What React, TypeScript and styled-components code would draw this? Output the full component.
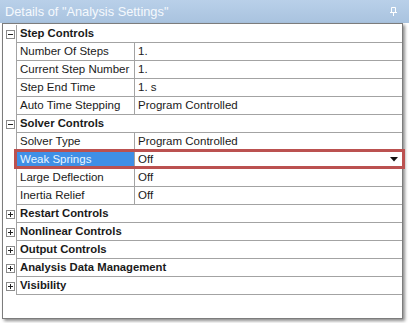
import React from "react";
import styled, { createGlobalStyle } from "styled-components";

type Prop = { name: string; value: string; selected?: boolean; dropdown?: boolean };
type Section = { title: string; open: boolean; props: Prop[] };

const sections: Section[] = [
  {
    title: "Step Controls",
    open: true,
    props: [
      { name: "Number Of Steps", value: "1." },
      { name: "Current Step Number", value: "1." },
      { name: "Step End Time", value: "1. s" },
      { name: "Auto Time Stepping", value: "Program Controlled" },
    ],
  },
  {
    title: "Solver Controls",
    open: true,
    props: [
      { name: "Solver Type", value: "Program Controlled" },
      { name: "Weak Springs", value: "Off", selected: true, dropdown: true },
      { name: "Large Deflection", value: "Off" },
      { name: "Inertia Relief", value: "Off" },
    ],
  },
  { title: "Restart Controls", open: false, props: [] },
  { title: "Nonlinear Controls", open: false, props: [] },
  { title: "Output Controls", open: false, props: [] },
  { title: "Analysis Data Management", open: false, props: [] },
  { title: "Visibility", open: false, props: [] },
];

const Global = createGlobalStyle`
  html, body {
    margin: 0;
    background: #fff;
  }
  body {
    font-family: "Liberation Sans", Arial, sans-serif;
  }
`;

const Window = styled.div`
  width: 409px;
  height: 323px;
  display: flex;
  flex-direction: column;
  background: #fff;
`;

const TitleBar = styled.div`
  height: 23px;
  flex: none;
  display: flex;
  align-items: center;
  justify-content: space-between;
  padding: 0 12px 1px 5px;
  box-sizing: border-box;
  background: linear-gradient(to bottom, #b9d0e9, #a9c3df);
  color: #f5f9fd;
  font-size: 12.8px;
`;

const Panel = styled.div`
  margin-left: 2px;
  width: 401px;
  height: 296px;
  box-sizing: border-box;
  border: 1px solid #7c7c7c;
  padding-top: 1px;
  box-shadow: 2px 2px 3px rgba(0, 0, 0, 0.45);
  display: flex;
  flex-direction: column;
`;

const Row = styled.div`
  position: relative;
  display: grid;
  grid-template-columns: 13px 1fr;
  height: 18px;
`;

const Gutter = styled.div`
  display: flex;
  align-items: center;
  justify-content: center;
  padding-left: 1px;
`;

const Cell = styled.div`
  border-left: 1px solid #a3a3a3;
  border-bottom: 1px solid #a3a3a3;
  display: grid;
  grid-template-columns: 118px 1fr;
  color: #1a1a1a;
  font-size: 11.5px;
  line-height: 17px;
  white-space: nowrap;
`;

const HeaderText = styled.div`
  grid-column: 1 / -1;
  padding-left: 3px;
  font-weight: bold;
  font-size: 11.3px;
`;

const NameCell = styled.div<{ $selected?: boolean }>`
  padding-left: 3px;
  border-right: 1px solid #a3a3a3;
  background: ${(p) => (p.$selected ? "#3f8fe6" : "transparent")};
  color: ${(p) => (p.$selected ? "#e8f6ff" : "inherit")};
`;

const ValueCell = styled.div`
  padding: 0 4px 0 3px;
  display: flex;
  align-items: center;
  justify-content: space-between;
`;

const Highlight = styled.div`
  position: absolute;
  left: 11px;
  top: -2px;
  width: 391px;
  height: 20px;
  box-sizing: border-box;
  border: 3px solid #bb5150;
  pointer-events: none;
`;

const ToggleBox = ({ open }: { open: boolean }) => (
  <svg width="9" height="9" viewBox="0 0 9 9">
    <rect x="0.5" y="0.5" width="8" height="8" fill="#fff" stroke="#8a8a8a" />
    <path d="M2 4.5h5" stroke="#222" />
    {!open && <path d="M4.5 2v5" stroke="#222" />}
  </svg>
);

const Pin = () => (
  <svg width="7" height="9" viewBox="0 0 7 9">
    <path d="M1.5 0.5h4v5h-4z" fill="none" stroke="#fff" />
    <path d="M0 5.5h7M3.5 6v3" stroke="#fff" />
  </svg>
);

const Arrow = () => (
  <svg width="8" height="5" viewBox="0 0 8 5">
    <path d="M0 0h8L4 4.5z" fill="#111" />
  </svg>
);

export default function App() {
  return (
    <Window>
      <Global />
      <TitleBar>
        <span>Details of "Analysis Settings"</span>
        <Pin />
      </TitleBar>
      <Panel>
        {sections.map((s) => (
          <React.Fragment key={s.title}>
            <Row>
              <Gutter>
                <ToggleBox open={s.open} />
              </Gutter>
              <Cell>
                <HeaderText>{s.title}</HeaderText>
              </Cell>
            </Row>
            {s.props.map((p) => (
              <Row key={p.name}>
                <Gutter />
                <Cell>
                  <NameCell $selected={p.selected}>{p.name}</NameCell>
                  <ValueCell>
                    {p.value}
                    {p.dropdown && <Arrow />}
                  </ValueCell>
                </Cell>
                {p.selected && <Highlight />}
              </Row>
            ))}
          </React.Fragment>
        ))}
      </Panel>
    </Window>
  );
}
